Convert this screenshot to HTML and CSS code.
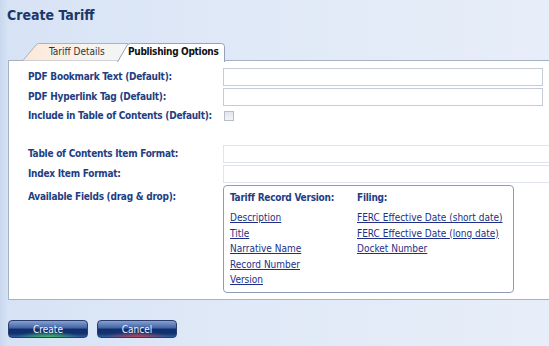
FILE: index.html
```html
<!DOCTYPE html>
<html lang="en">
<head>
    <meta charset="UTF-8">
    <title>Create Tariff</title>
    <link rel="stylesheet" href="styles.css">
</head>
<body>
    <div class="title">Create Tariff</div>

    <div class="tabs">
        <div class="tab tab-inactive">
            <svg class="tab-shape" width="106" height="18" viewBox="0 0 106 18">
                <defs>
                    <linearGradient id="tabFade" x1="0" y1="0" x2="1" y2="0">
                        <stop offset="0" stop-color="#fbe8d6"/>
                        <stop offset="0.6" stop-color="#f8f3ee"/>
                        <stop offset="1" stop-color="#f4f5f7"/>
                    </linearGradient>
                </defs>
                <path d="M0.5 18 L14 2 Q15 0.5 17 0.5 L106 0.5 L106 18 Z" fill="url(#tabFade)" stroke="#a9b3c3"/>
            </svg>
            <span>Tariff Details</span>
        </div>
        <div class="tab tab-active">
            <svg class="tab-shape" width="108" height="19" viewBox="0 0 108 19">
                <path d="M0.5 19 L10 2.5 Q11 0.5 13.5 0.5 L104.5 0.5 Q107.5 0.5 107.5 3.5 L107.5 19" fill="#fff" stroke="#95a2b7"/>
            </svg>
            <span>Publishing Options</span>
        </div>
    </div>

    <div class="panel">
        <div class="form">
            <label class="label">PDF Bookmark Text (Default):</label>
            <input class="field" type="text">

            <label class="label">PDF Hyperlink Tag (Default):</label>
            <input class="field" type="text">

            <label class="label check-row">Include in Table of Contents (Default):</label>
            <div class="check-row"><input class="check" type="checkbox" disabled></div>

            <div class="spacer"></div>

            <label class="label">Table of Contents Item Format:</label>
            <input class="field field-light" type="text" disabled>

            <label class="label">Index Item Format:</label>
            <input class="field field-light" type="text" disabled>

            <label class="label label-top">Available Fields (drag &amp; drop):</label>
            <div class="fields-box">
                <div class="fields-col">
                    <div class="fields-head">Tariff Record Version:</div>
                    <a href="#">Description</a>
                    <a href="#">Title</a>
                    <a href="#">Narrative Name</a>
                    <a href="#">Record Number</a>
                    <a href="#">Version</a>
                </div>
                <div class="fields-col">
                    <div class="fields-head">Filing:</div>
                    <a href="#">FERC Effective Date (short date)</a>
                    <a href="#">FERC Effective Date (long date)</a>
                    <a href="#">Docket Number</a>
                </div>
            </div>
        </div>
    </div>

    <div class="actions">
        <button class="btn btn-create">Create</button>
        <button class="btn btn-cancel">Cancel</button>
    </div>
</body>
</html>
```

FILE: styles.css
```css
html {
    overflow: hidden;
    background: linear-gradient(to right, #c9d8ef 0, #d7e3f5 8px, #e0e9f7 45%, #e7eef9 100%);
    min-height: 100%;
}
body {
    margin: 0;
    padding: 0 0 0 8px;
    width: 570px;
    font-family: "DejaVu Sans Condensed", "DejaVu Sans", sans-serif;
    font-size: 10px;
    color: #233e82;
}
.title {
    margin: 7px 0 0 -1px;
    font-size: 14px;
    line-height: 16px;
    font-weight: bold;
    color: #1c3769;
}
.tabs {
    display: flex;
    margin: 20px 0 0 14px;
    height: 18px;
    position: relative;
    z-index: 1;
}
.tab {
    position: relative;
    height: 18px;
    line-height: 18px;
}
.tab span {
    position: relative;
}
.tab-shape {
    position: absolute;
    left: 0;
    top: 0;
}
.tab-inactive {
    width: 106px;
    padding-left: 27px;
    box-sizing: border-box;
    color: #333;
}
.tab-active {
    width: 108px;
    margin-left: -11px;
    padding-left: 11px;
    box-sizing: border-box;
    font-weight: bold;
    letter-spacing: -0.3px;
    color: #111;
}
.panel {
    margin-top: -1px;
    background: #fff;
    border: 1px solid #a6b1c3;
    padding: 7px 0 6px 19px;
}
.form {
    display: grid;
    grid-template-columns: 195px auto;
    row-gap: 2px;
    align-items: center;
}
.label {
    font-weight: bold;
    letter-spacing: -0.25px;
    color: #233e82;
    line-height: 14px;
}
.label-top {
    align-self: start;
    padding-top: 5px;
}
.check-row {
    height: 16px;
    display: flex;
    align-items: center;
}
.spacer {
    grid-column: 1 / -1;
    height: 17px;
}
.field {
    width: 320px;
    height: 18px;
    box-sizing: border-box;
    border: 1px solid #c6ccd5;
    background: #fff;
    margin: 0;
}
.field-light {
    width: 340px;
    border-color: #e0e5eb;
}
.check {
    appearance: none;
    width: 10px;
    height: 10px;
    margin: 0 0 0 1px;
    border: 1px solid #b7bec8;
    background: linear-gradient(#e2e5ea, #f3f4f6);
}
.fields-box {
    width: 291px;
    height: 108px;
    box-sizing: border-box;
    border: 1px solid #8e9cb8;
    border-radius: 4px;
    padding: 5px 6px 3px;
    display: grid;
    grid-template-columns: 127px auto;
}
.fields-col {
    display: flex;
    flex-direction: column;
    align-items: flex-start;
}
.fields-head {
    font-weight: bold;
    letter-spacing: -0.25px;
    line-height: 14px;
    margin-bottom: 5px;
}
.fields-col a {
    color: #1d2f88;
    line-height: 15.5px;
}
.actions {
    display: flex;
    gap: 9px;
    margin-top: 20px;
}
.btn {
    width: 80px;
    height: 18px;
    padding: 0;
    border: 1px solid #2a3d6c;
    border-radius: 4px;
    font-family: inherit;
    font-size: 10px;
    color: #eef2fa;
}
.btn-create {
    background: radial-gradient(ellipse 40% 35% at 50% 100%, rgba(70, 200, 90, 0.85), rgba(70, 200, 90, 0) 100%),
        linear-gradient(#86a0d2 0, #4466a6 42%, #102d6c 52%, #13326f 78%, #2f5ca4 100%);
}
.btn-cancel {
    background: radial-gradient(ellipse 40% 35% at 50% 100%, rgba(200, 70, 80, 0.85), rgba(200, 70, 80, 0) 100%),
        linear-gradient(#86a0d2 0, #4466a6 42%, #102d6c 52%, #13326f 78%, #2f5ca4 100%);
}
```
